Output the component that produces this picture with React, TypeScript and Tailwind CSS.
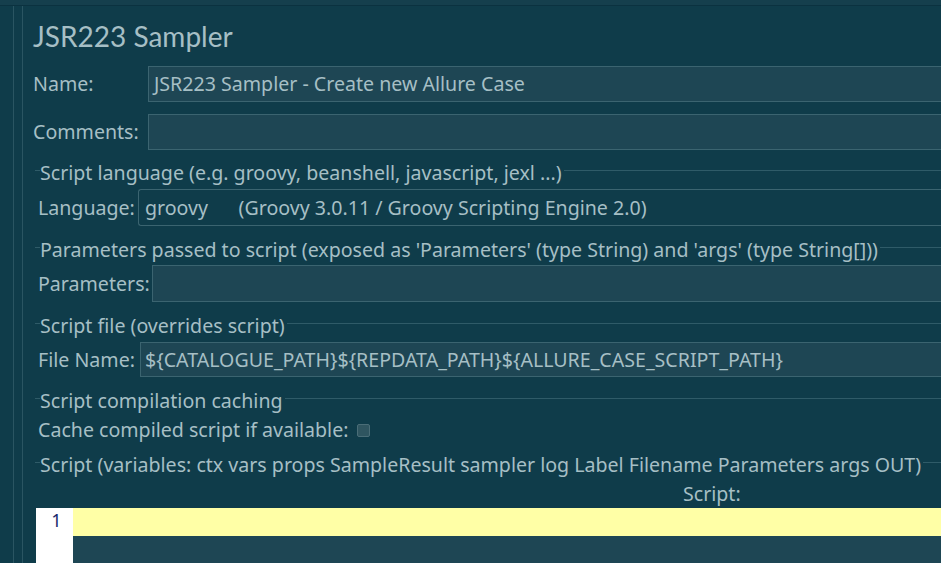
import React from "react";

const font = { fontFamily: "'Noto Sans', 'Open Sans', sans-serif" };
const titleFont = { fontFamily: "Lato, 'Noto Sans', sans-serif" };

function SectionTitle({ text, mt }: { text: string; mt: string }) {
  return (
    <div className={`flex items-start h-[24px] shrink-0 ${mt}`}>
      <div className="w-[5px] h-px bg-[#2f5b68] mt-[9px] shrink-0" />
      <div className="leading-[24px] whitespace-nowrap">{text}</div>
      <div className="flex-1 h-px bg-[#2f5b68] mt-[9px] ml-[2px]" />
    </div>
  );
}

export default function App() {
  return (
    <div
      className="w-[941px] h-[563px] overflow-hidden bg-[#0f3c4a] text-[#a6bfc5] text-[19.6px] flex flex-col"
      style={font}
    >
      <div className="h-[6px] bg-[#153f4d] border-b border-[#0b3240] shrink-0" />
      <div className="flex flex-1 min-h-0">
        <div className="w-[13px] shrink-0" />
        <div className="w-px bg-[#2a5562] shrink-0" />
        <div className="w-[8px] shrink-0" />
        <div className="w-px bg-[#2a5562] shrink-0" />
        <div className="flex-1 min-w-0 flex flex-col pl-[10px]">
          <div className="mt-[16px] text-[28px] leading-[28px] whitespace-nowrap shrink-0" style={titleFont}>
            JSR223 Sampler
          </div>

          <div className="mt-[16px] flex items-center h-[36px] shrink-0">
            <div className="w-[115px] shrink-0">Name:</div>
            <div className="flex-1 h-full bg-[#1e4654] border border-[#3b6470] border-r-0 flex items-center pl-[5px] whitespace-nowrap">
              JSR223 Sampler - Create new Allure Case
            </div>
          </div>

          <div className="mt-[12px] flex items-center h-[36px] shrink-0">
            <div className="w-[115px] shrink-0">Comments:</div>
            <div className="flex-1 h-full bg-[#1e4654] border border-[#3b6470] border-r-0" />
          </div>

          <div className="ml-[2px] flex flex-col flex-1 min-h-0">
            <SectionTitle text="Script language (e.g. groovy, beanshell, javascript, jexl ...)" mt="mt-[11px]" />
            <div className="mt-[4px] flex items-center h-[37px] pl-[3px] shrink-0">
              <div className="w-[100px] shrink-0 whitespace-nowrap">Language:</div>
              <div className="flex-1 h-full bg-[#0f3c4a] border border-[#3b6470] border-r-0 rounded-l-[3px] flex items-center pl-[6px] whitespace-pre">
                {"groovy      (Groovy 3.0.11 / Groovy Scripting Engine 2.0)"}
              </div>
            </div>

            <SectionTitle
              text="Parameters passed to script (exposed as 'Parameters' (type String) and 'args' (type String[]))"
              mt="mt-[12px]"
            />
            <div className="mt-[3px] flex items-center h-[37px] pl-[3px] shrink-0">
              <div className="w-[114px] shrink-0 whitespace-nowrap">Parameters:</div>
              <div className="flex-1 h-full bg-[#1e4654] border border-[#3b6470] border-r-0" />
            </div>

            <SectionTitle text="Script file (overrides script)" mt="mt-[12px]" />
            <div className="mt-[4px] flex items-center h-[35px] pl-[3px] shrink-0">
              <div className="w-[102px] shrink-0 whitespace-nowrap">File Name:</div>
              <div className="flex-1 h-full bg-[#1e4654] border border-[#3b6470] border-r-0 flex items-center pl-[4px] whitespace-nowrap">
                {"${CATALOGUE_PATH}${REPDATA_PATH}${ALLURE_CASE_SCRIPT_PATH}"}
              </div>
            </div>

            <SectionTitle text="Script compilation caching" mt="mt-[12px]" />
            <div className="mt-[5px] flex items-center h-[24px] pl-[3px] shrink-0">
              <div className="whitespace-nowrap">Cache compiled script if available:</div>
              <div className="ml-[9px] w-[13px] h-[13px] bg-[#2f5560] border border-[#4a6d77] rounded-[2px] shrink-0" />
            </div>

            <SectionTitle
              text="Script (variables: ctx vars props SampleResult sampler log Label Filename Parameters args OUT)"
              mt="mt-[11px]"
            />
            <div className="mt-[5px] h-[24px] leading-[24px] pl-[648px] whitespace-nowrap shrink-0">Script:</div>

            <div className="mt-[2px] flex flex-1 min-h-0 pl-[1px]">
              <div className="w-[37px] bg-white shrink-0 flex justify-center">
                <div className="h-[28px] leading-[24px] text-[#1a2a6c] text-[18px] pl-[4px]">1</div>
              </div>
              <div className="flex-1 flex flex-col bg-[#1e4654]">
                <div className="h-[28px] bg-[#ffffa6] shrink-0" />
              </div>
            </div>
          </div>
        </div>
      </div>
    </div>
  );
}
